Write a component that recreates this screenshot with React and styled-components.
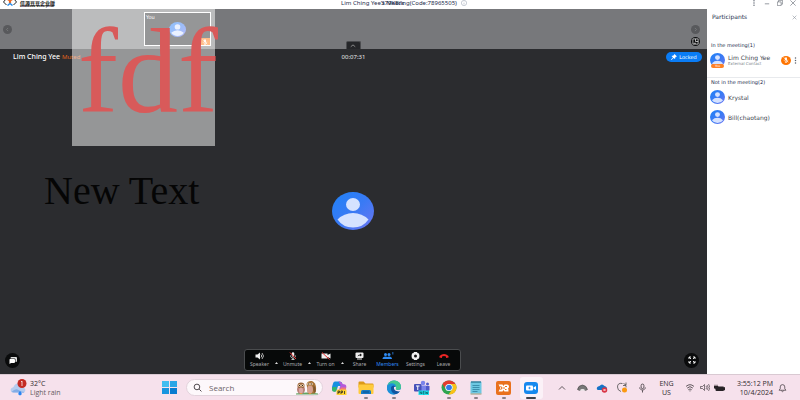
import React from "react";
import styled, { createGlobalStyle, css } from "styled-components";

const ui = '"DejaVu Sans", "Noto Sans", "Noto Sans CJK SC", sans-serif';
const narrow = '"Noto Sans", "Noto Sans CJK SC", sans-serif';
const system = '"Open Sans", "Noto Sans", sans-serif';

const Global = createGlobalStyle`
  *, *::before, *::after { box-sizing: border-box; }
  body { margin: 0; overflow: hidden; font-family: ${ui}; font-size: 6px; line-height: 8px; }
  button, input { font: inherit; color: inherit; border: 0; padding: 0; margin: 0; background: none; }
  h1, h2, h3, p, ul { margin: 0; padding: 0; font-size: inherit; font-weight: inherit; list-style: none; }
  svg { display: block; flex: none; }
`;

const Page = styled.div`
  min-height: 100vh;
  display: grid;
  grid-template-rows: 9px 1fr 26px;
`;
const TitleBar = styled.header`
  display: grid;
  grid-template-columns: 1fr auto 1fr;
  background: #fff;
  color: #1c2c4c;
`;
const Brand = styled.div`
  display: flex;
  gap: 3px;
  padding-left: 3px;
`;
const BrandText = styled.div`
  display: flex;
  flex-direction: column;
  color: #151515;
  white-space: nowrap;
`;
const BrandName = styled.span`
  font: 700 5px/5px "Noto Sans CJK SC", sans-serif;
`;
const BrandSub = styled.span`
  font: 700 3px/3px ${ui};
`;
const Title = styled.h1`
  position: relative;
  display: flex;
  gap: 4px;
  padding-left: 8px;
  font: 400 6px/7px ${narrow};
  white-space: nowrap;
`;
const Rate = styled.span`
  position: absolute;
  left: 48px;
  top: 0;
`;
const WindowButtons = styled.div`
  display: flex;
  justify-content: flex-end;
  gap: 3px;
  padding-right: 2px;
`;
const WindowButton = styled.button`
  width: 10px;
  height: 6px;
  display: grid;
  place-items: center;
  color: #555c68;
`;
const Meeting = styled.main`
  display: grid;
  grid-template-columns: 1fr 93px;
`;
const Call = styled.section`
  position: relative;
  display: grid;
  grid-template-rows: 40px 1fr;
  background: #2b2c2f;
  color: #fff;
`;
const Strip = styled.div`
  position: relative;
  display: flex;
  justify-content: space-between;
  align-items: center;
  background: #77787b;
  padding: 0 7px 0 3px;
`;
const Round = styled.button`
  width: ${(p) => p.$size}px;
  height: ${(p) => p.$size}px;
  border-radius: 50%;
  display: grid;
  place-items: center;
  background: ${(p) => (p.$muted ? "#58595c" : "#0a0b0c")};
  color: ${(p) => (p.$muted ? "#8d8e90" : "#fff")};
`;
const StripEnd = styled.div`
  display: flex;
  flex-direction: column;
  gap: 3px;
  padding-top: 12px;
`;
const Collapse = styled.button`
  position: absolute;
  left: 50%;
  bottom: 0;
  width: 15px;
  height: 8px;
  margin-left: -8px;
  border: 1px solid #4b4c4f;
  border-bottom: 0;
  border-radius: 2px 2px 0 0;
  background: #252629;
  color: #aaa;
  display: grid;
  place-items: center;
`;
const Tile = styled.div`
  position: absolute;
  left: 144px;
  top: 3px;
  width: 67px;
  height: 34px;
  border: 1px solid #fff;
  background: #2b2c2f;
  display: grid;
  place-items: center;
`;
const TileName = styled.span`
  position: absolute;
  left: 1px;
  top: 0;
  font-size: 5px;
`;
const TileMic = styled.span`
  position: absolute;
  right: 0;
  bottom: 0;
  width: 10px;
  height: 7px;
  background: #ff7a10;
  display: grid;
  place-items: center;
`;
const Stage = styled.div`
  display: grid;
  grid-template-rows: 24px 1fr auto;
  padding-bottom: 3px;
`;
const StageHead = styled.div`
  display: grid;
  grid-template-columns: 1fr auto 1fr;
  align-items: start;
  padding: 4px 5px 0;
`;
const Speaker = styled.p`
  padding-left: 8px;
  font: 500 7px/8px ${narrow};
`;
const Muted = styled.span`
  color: #e0631b;
  font-size: 6px;
  font-weight: 400;
`;
const Timer = styled.time`
  color: #e8e8e8;
  font-family: ${narrow};
`;
const Locked = styled.button`
  justify-self: end;
  width: 36px;
  height: 10px;
  margin-top: -1px;
  border-radius: 5px;
  background: #0a7cf5;
  display: flex;
  align-items: center;
  justify-content: center;
  gap: 2px;
  font-size: 5px;
`;
const Center = styled.div`
  display: grid;
  place-items: center;
  padding-right: 2px;
`;
const Controls = styled.div`
  display: flex;
  justify-content: space-between;
  align-items: center;
  padding: 0 8px 0 5px;
`;
const Toolbar = styled.div`
  display: flex;
  align-items: center;
  height: 22px;
  padding: 0 2px;
  border: 1px solid #4a4c4e;
  border-radius: 3px;
  background: #070909;
`;
const Tool = styled.button`
  width: ${(p) => (p.$split ? 26 : 28)}px;
  display: flex;
  flex-direction: column;
  align-items: center;
  gap: 1px;
`;
const ToolLabel = styled.span`
  font: 5px/7px ${narrow};
  color: ${(p) => (p.$active ? "#2f8cf5" : "#a9abad")};
`;
const Caret = styled.button`
  width: 7px;
  height: 8px;
  padding-top: 5px;
  display: grid;
  place-items: center;
  color: #ddd;
`;
const Note = styled.div`
  position: absolute;
  left: 72px;
  top: 0;
  width: 143px;
  height: 137px;
  background: rgba(255, 255, 255, 0.5);
  color: #d85a5a;
  font: 120px/126px "Liberation Serif", serif;
  padding-left: 6px;
  white-space: nowrap;
`;
const FreeText = styled.div`
  position: absolute;
  left: 44px;
  top: 158px;
  color: #050505;
  font: 40px/48px "Liberation Serif", serif;
  white-space: nowrap;
`;
const Side = styled.aside`
  background: #fff;
  color: #3c4450;
`;
const SideHead = styled.div`
  display: flex;
  justify-content: space-between;
  align-items: center;
  height: 16px;
  padding: 0 3px 0 5px;
  color: #1c2c4c;
  font: 6px/8px ${ui};
`;
const SideClose = styled.button`
  color: #888f99;
`;
const Group = styled.section`
  padding: ${(p) => (p.$first ? "16px 0 6px 3px" : "0 0 0 3px")};
  ${(p) => p.$first && css`border-bottom: 1px solid #e8eaed;`}
`;
const GroupTitle = styled.h3`
  font-size: 5px;
  line-height: 8px;
  padding: 0 1px;
  color: #1c2c4c;
`;
const Person = styled.li`
  display: flex;
  align-items: center;
  gap: 3px;
  height: ${(p) => (p.$tall ? 22 : 20)}px;
`;
const People = styled.ul`
  padding-top: ${(p) => (p.$gap ? 1 : 0)}px;
`;
const Face = styled.span`
  position: relative;
`;
const YouTag = styled.span`
  position: absolute;
  left: 1px;
  right: 1px;
  bottom: -1px;
  border-radius: 2px;
  background: #ff8126;
  color: #fff;
  font-size: 3px;
  line-height: 4px;
  text-align: center;
`;
const Names = styled.div`
  flex: 1;
  line-height: 7px;
  white-space: nowrap;
`;
const Role = styled.div`
  font-size: 4px;
  line-height: 6px;
  color: #777f8a;
`;
const Mic = styled.button`
  width: 10px;
  height: 9px;
  border-radius: 50%;
  background: #ff7400;
  color: #fff;
  display: grid;
  place-items: center;
`;
const More = styled.button`
  width: 6px;
  color: #59616d;
`;
const Taskbar = styled.footer`
  display: grid;
  grid-template-columns: auto 1fr auto;
  align-items: center;
  background: #f6e1ec;
  border-top: 1px solid #d9c9d2;
  color: #2f2a2e;
  font: 7px/9px ${system};
  padding: 0 9px 0 10px;
`;
const Weather = styled.button`
  display: flex;
  align-items: center;
  gap: 3px;
  text-align: left;
  line-height: 9px;
`;
const Condition = styled.div`
  color: #655c63;
`;
const Apps = styled.nav`
  display: flex;
  align-items: center;
  justify-content: flex-end;
  padding-right: 7px;
`;
const Start = styled.button`
  padding: 0 9px 0 0;
`;
const Search = styled.label`
  width: 137px;
  height: 17px;
  display: flex;
  align-items: center;
  gap: 7px;
  padding: 0 3px 0 6px;
  margin-right: 2px;
  border: 1px solid #e3d3dc;
  border-radius: 9px;
  background: #fdf8fb;
`;
const SearchInput = styled.input`
  flex: 1;
  min-width: 0;
  outline: 0;
  font-size: 8px;
  line-height: 12px;
  &::placeholder { color: #6b6368; opacity: 1; }
`;
const AppGrid = styled.div`
  display: grid;
  grid-template-columns: repeat(8, 1fr);
  width: 220px;
`;
const AppButton = styled.button`
  position: relative;
  height: 22px;
  margin: 0 2px;
  border-radius: 3px;
  display: grid;
  place-items: center;
  background: ${(p) => (p.$active ? "#fbf1f7" : "transparent")};
  &::after {
    content: "";
    display: ${(p) => (p.$open || p.$active ? "block" : "none")};
    position: absolute;
    bottom: 0;
    left: 50%;
    width: ${(p) => (p.$active ? 10 : 4)}px;
    height: 2px;
    border-radius: 1px;
    background: ${(p) => (p.$active ? "#3f444c" : "#8b8188")};
    transform: translateX(-50%);
  }
`;
const Tray = styled.div`
  display: flex;
  align-items: center;
`;
const TrayButton = styled.button`
  width: ${(p) => p.$w}px;
  height: 20px;
  display: grid;
  place-items: center;
  text-align: center;
`;
const Clock = styled.button`
  width: 46px;
  text-align: right;
  white-space: nowrap;
`;

function Avatar({ w, h, id }) {
  return (
    <svg width={w} height={h} viewBox="0 0 42 38" preserveAspectRatio="none" aria-hidden="true">
      <defs>
        <linearGradient id={id} x1="0" y1="0" x2="1" y2="1">
          <stop offset="0" stopColor="#1f82f7" />
          <stop offset="0.5" stopColor="#397af4" />
          <stop offset="1" stopColor="#6d76f2" />
        </linearGradient>
      </defs>
      <ellipse cx="21" cy="19" rx="21" ry="19" fill={`url(#${id})`} />
      <ellipse cx="21" cy="12.5" rx="7" ry="6.5" fill="#d5e2ff" />
      <path d="M5.500 27.500Q12 21 21 21T36.500 27.500Q31 35.500 21 35.500T5.500 27.500Z" fill="#d5e2ff" />
    </svg>
  );
}

function Line({ d, w = 8, h = 8, sw = 1, box = "0 0 16 16", color = "currentColor", children }) {
  return (
    <svg width={w} height={h} viewBox={box} fill="none" stroke={color} strokeWidth={sw * 1.5} aria-hidden="true">
      {d && <path d={d} />}
      {children}
    </svg>
  );
}

const MicOff = ({ w = 8, h = 8, slash = "#f03434", fill = "#eee" }) => (
  <svg width={w} height={h} viewBox="0 0 16 16" fill="none" aria-hidden="true">
    <rect x="5.500" y="0.500" width="5" height="9" rx="2.500" fill={fill} />
    <path d="M3 7c0 7 10 7 10 0M8 12v3M5 15h6" stroke={fill} strokeWidth="1.500" />
    <path d="M2 1l12 13" stroke={slash} strokeWidth="2" />
  </svg>
);

const SpeakerIcon = () => (
  <svg width="9" height="8" viewBox="0 0 18 16" fill="none" aria-hidden="true">
    <path d="M1 5h4l5-4v14l-5-4H1z" fill="#eee" />
    <path d="M12 5q3 3 0 6M14 2q6 6 0 12" stroke="#eee" strokeWidth="1.500" />
  </svg>
);
const CameraOff = () => (
  <svg width="10" height="8" viewBox="0 0 20 16" fill="none" aria-hidden="true">
    <path d="M1 3h12v3l6-3v10l-6-3v3H1z" fill="#eee" />
    <path d="M2 1l15 14" stroke="#e83232" strokeWidth="2" />
  </svg>
);
const ShareIcon = () => (
  <svg width="9" height="8" viewBox="0 0 18 16" aria-hidden="true">
    <rect x="1" y="1" width="16" height="11" rx="2" fill="#eee" />
    <path d="M4 13h10v2H4z" fill="#eee" />
    <path d="M5 9q1-4 5-4V3l4 3-4 3V7Q7 7 5 9z" fill="#111" />
  </svg>
);
const MembersIcon = () => (
  <svg width="12" height="8" viewBox="0 0 24 16" fill="#2f8cf5" aria-hidden="true">
    <circle cx="7" cy="5" r="3" /><circle cx="14" cy="5" r="3" />
    <path d="M1 14q0-5 6-5 3 0 4 1 1-1 3-1 6 0 6 5zM21 0h1.500v5H21z" />
  </svg>
);
const GearIcon = () => (
  <svg width="9" height="8" viewBox="0 0 18 16" aria-hidden="true">
    <path d="M6 0h6l1 2 3 1 1 5-1 5-3 1-1 2H6l-1-2-3-1-1-5 1-5 3-1z" fill="#eee" />
    <circle cx="9" cy="8" r="3" fill="#111" />
  </svg>
);
const LeaveIcon = () => (
  <svg width="10" height="8" viewBox="0 0 20 16" aria-hidden="true">
    <path d="M1 11V8q9-8 18 0v3l-5 1V9q-4-2-8 0v3z" fill="#ed2525" />
  </svg>
);
const CaretIcon = () => (
  <svg width="3" height="2" viewBox="0 0 6 4" aria-hidden="true"><path d="M0 4l3-4 3 4z" fill="currentColor" /></svg>
);

const BrandMark = () => (
  <svg width="14" height="6" viewBox="0 0 28 12" fill="none" aria-hidden="true">
    <path d="M6-2L1 4l6 6M22-2l5 6-6 6" stroke="#222" strokeWidth="2" />
    <path d="M9-1l5 3 5-3" stroke="#ef6b22" strokeWidth="2.500" />
    <circle cx="14" cy="4" r="2.500" fill="#ef6b22" />
    <path d="M9 11l5-4 5 4" stroke="#2b8de8" strokeWidth="3" />
  </svg>
);

const CopilotIcon = () => (
  <svg width="16" height="16" viewBox="0 0 32 32" aria-hidden="true">
    <path d="M8 3h10q4 0 5 5l1 4H14l-3 10H7q-6 0-5-8l2-7q1-4 4-4z" fill="#168fe0" />
    <path d="M3 14h9L9 24q-8 0-7-6z" fill="#35b56b" />
    <path d="M17 3q5 0 6 5l5 1q4 1 2 9l-2 5H15l4-13-4-7z" fill="#b558db" />
    <path d="M20 15h10q0 8-4 11H15z" fill="#f17a78" />
    <rect x="11" y="19" width="20" height="11" rx="1" fill="#ffd22e" />
    <path d="M14 28v-6h3v3h-3M20 28v-6h3v3h-3M27 22v6" stroke="#222" strokeWidth="1.500" fill="none" />
  </svg>
);
const FolderIcon = () => (
  <svg width="16" height="16" viewBox="0 0 32 32" aria-hidden="true">
    <path d="M1 5q0-2 2-2h8l4 4h14q2 0 2 2v6H1z" fill="#dc9a18" />
    <rect x="1" y="9" width="30" height="19" rx="2" fill="#ffcb3d" />
    <path d="M6 28v-5q0-3 3-3h14q3 0 3 3v5z" fill="#1779c5" />
    <path d="M10 24h12" stroke="#0d518d" strokeWidth="2" />
  </svg>
);
const EdgeIcon = () => (
  <svg width="16" height="15" viewBox="0 0 32 30" aria-hidden="true">
    <circle cx="16" cy="15" r="14" fill="#1685cf" />
    <path d="M3 11Q7 0 18 1q12 2 12 13 0 6-8 6-5 0-3-4 1-7-7-7-5 0-9 2z" fill="#43c991" />
    <path d="M3 11Q8 5 15 7q6 2 5 8-2-4-6-3-5 2-4 8 2 7 8 9Q5 30 2 19z" fill="#1c91da" />
    <path d="M10 18q-1-6 5-7 4 0 4 5-2 4 3 5 4 0 7-1-4 8-11 8-7-2-8-10z" fill="#11549f" />
    <path d="M16 14q5-2 4 2-2 4 4 4 4 0 8-2v3q-5 3-11 1-6-2-5-8z" fill="#f6e1ec" />
  </svg>
);
const TeamsIcon = () => (
  <svg width="17" height="16" viewBox="0 0 34 32" aria-hidden="true">
    <circle cx="20" cy="6" r="4.500" fill="#7b83eb" /><circle cx="29" cy="8" r="3" fill="#5059c9" />
    <path d="M12 11h14v12q-2 5-8 5-6-1-6-6z" fill="#7b83eb" />
    <path d="M26 12h7v8q-1 4-5 4h-2z" fill="#5059c9" />
    <rect x="2" y="8" width="15" height="15" rx="2" fill="#4650b8" />
    <path d="M6 12h7M9.500 12v8" stroke="#fff" strokeWidth="2" />
    <rect x="11" y="21" width="21" height="9" fill="#1fe4ed" />
    <path d="M14 28v-5l3 5v-5M23 23h-3v5h3M20 25.500h3M25 23l1 5 1.500-4 1.500 4 1-5" stroke="#093b44" fill="none" />
  </svg>
);
const ChromeIcon = () => (
  <svg width="16" height="15" viewBox="0 0 32 32" preserveAspectRatio="none" aria-hidden="true">
    <circle cx="16" cy="16" r="15" fill="#2fa44f" />
    <path d="M3 8.500A15 15 0 0 1 29 8.500H16a7.500 7.500 0 0 0-6.500 11.200z" fill="#e33b2e" />
    <path d="M29 8.500A15 15 0 0 1 15 31l7.500-11.200A7.500 7.500 0 0 0 16 8.500z" fill="#fbc116" />
    <circle cx="16" cy="16" r="7.500" fill="#fff" /><circle cx="16" cy="16" r="5.800" fill="#317be8" />
  </svg>
);
const NotepadIcon = () => (
  <svg width="12" height="15" viewBox="0 0 24 30" aria-hidden="true">
    <rect x="1" y="3" width="22" height="26" rx="2" fill="#6dc8e2" />
    <path d="M3 4h18" stroke="#17607c" strokeWidth="4" strokeDasharray="2 2" />
    <path d="M5 11h14M5 15h14M5 19h14M5 23h10" stroke="#2c7d9c" strokeWidth="1.500" />
    <path d="M1 27h22v2H1z" fill="#d5a67a" />
  </svg>
);
const XamppIcon = () => (
  <svg width="15" height="14" viewBox="0 0 30 28" fill="none" aria-hidden="true">
    <rect width="30" height="28" rx="4" fill="#e9711d" />
    <path d="M5 7h8l2 3 2-3h5q4 0 4 4 0 3-2 4 1 1 1 6h-8l-2-3-2 3H5l4-7z" fill="#fff" />
    <path d="M9 10l3 4-3 4M18 11h4M18 17h3M13 14h5" stroke="#e9711d" strokeWidth="2" />
  </svg>
);
const MeetIcon = () => (
  <svg width="14" height="12" viewBox="0 0 28 24" aria-hidden="true">
    <rect width="28" height="24" rx="6" fill="#1689ee" />
    <rect x="4" y="7" width="14" height="10" rx="2" fill="#fff" />
    <path d="M19 11l5-3v8l-5-3z" fill="#fff" />
    <path d="M11 9.500v5M8.500 12h5" stroke="#1689ee" strokeWidth="1.500" />
  </svg>
);
const StartIcon = () => (
  <svg width="15" height="13" viewBox="0 0 30 26" aria-hidden="true">
    <path d="M0 0h14v12H0z" fill="#42bdf0" /><path d="M16 0h14v12H16z" fill="#2ba5e6" />
    <path d="M0 14h14v12H0z" fill="#1995df" /><path d="M16 14h14v12H16z" fill="#087cd0" />
  </svg>
);
const OwlsIcon = () => (
  <svg width="24" height="15" viewBox="0 0 48 30" aria-hidden="true">
    <path d="M2 27q22-4 44 0v2H2z" fill="#66a365" />
    <ellipse cx="12" cy="19" rx="8" ry="9" fill="#b98279" /><ellipse cx="12" cy="11" rx="7" ry="6" fill="#9a673b" />
    <ellipse cx="12" cy="21" rx="4" ry="6" fill="#dba8a5" />
    <path d="M23 8q2-7 11-6 7 3 8 12 1 10-3 13H26z" fill="#a87335" />
    <ellipse cx="30" cy="19" rx="6" ry="8" fill="#d6a292" />
    <path d="M37 10q7 8 3 16-5-4-3-16z" fill="#80572e" />
    <circle cx="9" cy="11" r="2.500" fill="#f2dcc2" /><circle cx="15" cy="11" r="2.500" fill="#f2dcc2" />
    <circle cx="27" cy="8" r="2.500" fill="#f2dcc2" /><circle cx="33" cy="8" r="2.500" fill="#f2dcc2" />
    <path d="M9 10v2M15 10v2M27 7v2M33 7v2" stroke="#332515" strokeWidth="2" />
    <path d="M10 27h4M28 27h4" stroke="#e49739" strokeWidth="2" />
  </svg>
);
const WeatherIcon = () => (
  <svg width="17" height="17" viewBox="0 0 34 34" aria-hidden="true">
    <path d="M3 26q-5-7 4-10Q11 6 20 10q4 2 5 7 8 1 5 8-2 3-5 2H7z" fill="#b5ccef" />
    <path d="M3 26q8-8 14-4t12 4q-2 2-5 1H7z" fill="#83ace6" />
    <path d="M20 24q7 7 0 9-7-2 0-9z" fill="#2684f4" />
    <circle cx="24" cy="9" r="9" fill="#c42b24" />
    <path d="M22 6l2-2v10" fill="none" stroke="#fff" strokeWidth="1.500" />
  </svg>
);

const apps = [
  ["Copilot", CopilotIcon, false],
  ["File Explorer", FolderIcon, true],
  ["Edge", EdgeIcon, true],
  ["Teams", TeamsIcon, false],
  ["Chrome", ChromeIcon, true],
  ["Notepad", NotepadIcon, true],
  ["XAMPP", XamppIcon, true],
];

const tools = [
  ["Speaker", SpeakerIcon, true],
  ["Unmute", MicOff, true],
  ["Turn on", CameraOff, true],
  ["Share", ShareIcon],
  ["Members", MembersIcon, false, true],
  ["Settings", GearIcon],
  ["Leave", LeaveIcon],
];

function CallView() {
  return (
    <Call>
      <Strip>
        <Round $size={9} $muted aria-label="Previous"><Line w={5} h={5} sw={1.2} d="M10 3L5 8l5 5" /></Round>
        <Tile>
          <TileName>You</TileName>
          <Avatar w={17} h={15} id="tileFace" />
          <TileMic><MicOff w={6} h={6} fill="#fff" slash="#fff" /></TileMic>
        </Tile>
        <Collapse aria-label="Collapse strip"><Line w={6} h={6} sw={1.3} d="M2 10l6-5 6 5" /></Collapse>
        <StripEnd>
          <Round $size={9} $muted aria-label="Next"><Line w={5} h={5} sw={1.2} d="M6 3l5 5-5 5" /></Round>
          <Round $size={9} aria-label="Layout">
            <Line w={7} h={7} d="M2 2h12v12H2zM8 2v6h6M4 12h5" />
          </Round>
        </StripEnd>
      </Strip>
      <Stage>
        <StageHead>
          <Speaker>Lim Ching Yee <Muted>Muted</Muted></Speaker>
          <Timer>00:07:31</Timer>
          <Locked>
            <svg width="6" height="6" viewBox="0 0 12 12" fill="#fff" aria-hidden="true"><path d="M7 0l5 5-3 1-1 4-3-2-4 4-1-1 4-4-3-3 4-1z" /></svg>
            Locked
          </Locked>
        </StageHead>
        <Center><Avatar w={42} h={38} id="mainFace" /></Center>
        <Controls>
          <Round $size={15} aria-label="Chat">
            <svg width="8" height="7" viewBox="0 0 16 14" fill="#fff" aria-hidden="true">
              <path d="M5 0h9q2 0 2 2v6q0 2-2 2h-1V5q0-2-2-2H3V2q0-2 2-2z" fill="#ddd" /><path d="M2 4h8q2 0 2 2v4q0 2-2 2H4l-3 2V5z" />
            </svg>
          </Round>
          <Toolbar>
            {tools.map(([label, Icon, split, active]) => (
              <React.Fragment key={label}>
                <Tool $split={split}>
                  <Icon />
                  <ToolLabel $active={active}>{label}</ToolLabel>
                </Tool>
                {split && <Caret aria-label={`${label} options`}><CaretIcon /></Caret>}
              </React.Fragment>
            ))}
          </Toolbar>
          <Round $size={15} aria-label="Full screen">
            <Line w={8} h={8} sw={1.2} d="M2 6V2h4M2 2l4 4M10 2h4v4M14 2l-4 4M2 10v4h4M2 14l4-4M10 14h4v-4M14 14l-4-4" />
          </Round>
        </Controls>
      </Stage>
      <Note>fdf</Note>
      <FreeText>New Text</FreeText>
    </Call>
  );
}

function Participants() {
  return (
    <Side>
      <SideHead>
        <h2>Participants</h2>
        <SideClose aria-label="Close"><Line w={5} h={5} sw={1.2} d="M2 2l12 12M14 2L2 14" /></SideClose>
      </SideHead>
      <Group $first>
        <GroupTitle>In the meeting(1)</GroupTitle>
        <People>
          <Person $tall>
            <Face><Avatar w={15} h={14} id="face1" /><YouTag>You</YouTag></Face>
            <Names>Lim Ching Yee<Role>External Contact</Role></Names>
            <Mic aria-label="Muted"><MicOff w={6} h={6} fill="#fff" slash="#fff" /></Mic>
            <More aria-label="More">
              <svg width="3" height="7" viewBox="0 0 6 14" fill="currentColor" aria-hidden="true"><circle cx="3" cy="2" r="1.500" /><circle cx="3" cy="7" r="1.500" /><circle cx="3" cy="12" r="1.500" /></svg>
            </More>
          </Person>
        </People>
      </Group>
      <Group>
        <GroupTitle>Not in the meeting(2)</GroupTitle>
        <People $gap>
          <Person><Avatar w={15} h={14} id="face2" /><Names>Krystal</Names></Person>
          <Person><Avatar w={15} h={14} id="face3" /><Names>Bill(chaotang)</Names></Person>
        </People>
      </Group>
    </Side>
  );
}

function SystemBar() {
  return (
    <Taskbar>
      <Weather>
        <WeatherIcon />
        <div>32°C<Condition>Light rain</Condition></div>
      </Weather>
      <Apps>
        <Start aria-label="Start"><StartIcon /></Start>
        <Search>
          <Line w={9} h={9}><circle cx="7" cy="7" r="5" /><path d="M11 11l4 4" /></Line>
          <SearchInput type="text" placeholder="Search" aria-label="Search" />
          <OwlsIcon />
        </Search>
        <AppGrid>
          {apps.map(([label, Icon, open]) => (
            <AppButton key={label} aria-label={label} $open={open}><Icon /></AppButton>
          ))}
          <AppButton aria-label="Meeting" $active><MeetIcon /></AppButton>
        </AppGrid>
      </Apps>
      <Tray>
        <TrayButton $w={20} aria-label="Hidden icons"><Line d="M2 11l6-6 6 6" /></TrayButton>
        <TrayButton $w={20} aria-label="Network drive">
          <svg width="11" height="8" viewBox="0 0 22 16" fill="none" aria-hidden="true"><path d="M1 11Q2 3 11 2q8 1 10 9l-4 2q-6-6-12 0z" fill="#777" stroke="#333" /><path d="M5 13q6-7 12 0" fill="#e5e5e5" /></svg>
        </TrayButton>
        <TrayButton $w={20} aria-label="OneDrive">
          <svg width="12" height="10" viewBox="0 0 24 20" aria-hidden="true"><path d="M2 13q-2-6 5-7Q12 0 17 6q6 1 5 8H4z" fill="#1572c7" /><circle cx="17" cy="14" r="5.500" fill="#d93445" /><path d="M15 12l4 4M19 12l-4 4" stroke="#fff" strokeWidth="1.500" /></svg>
        </TrayButton>
        <TrayButton $w={20} aria-label="Update">
          <svg width="12" height="11" viewBox="0 0 24 22" fill="none" aria-hidden="true"><path d="M13 3Q3 1 3 10q0 7 7 9M15 3l5 3M20 1v6h-6M20 8v3" stroke="#444" strokeWidth="1.500" /><circle cx="17" cy="16" r="5" fill="#fb9911" /></svg>
        </TrayButton>
        <TrayButton $w={20} aria-label="Microphone">
          <Line w={9} h={10} sw={0.9}><rect x="5.500" y="1" width="5" height="8" rx="2.500" /><path d="M3 7c0 6 10 6 10 0M8 12v4" /></Line>
        </TrayButton>
        <TrayButton $w={29}>ENG<br />US</TrayButton>
        <TrayButton $w={17} aria-label="Wi-Fi">
          <Line w={10} h={9} sw={0.9} d="M1 6q7-6 14 0M3 9q5-5 10 0M5 12q3-3 6 0M8 13v2" />
        </TrayButton>
        <TrayButton $w={14} aria-label="Volume">
          <Line w={10} h={9} sw={0.8} box="0 0 20 16" d="M1 6h4l4-4v12l-4-4H1zM12 5q3 3 0 6M14 3q5 5 0 10M17 1q6 7 0 14" />
        </TrayButton>
        <TrayButton $w={15} aria-label="Battery">
          <svg width="11" height="8" viewBox="0 0 22 16" aria-hidden="true"><rect x="3" y="5" width="17" height="9" rx="2" fill="#282327" /><path d="M20 7h2v5h-2zM2 1v4M6 1v4M0 4h8v4q-4 3-8 0z" fill="#282327" stroke="#282327" /></svg>
        </TrayButton>
        <Clock>3:55:12 PM<br />10/4/2024</Clock>
        <TrayButton $w={18} aria-label="Notifications">
          <Line w={9} h={10} sw={0.8} d="M2 12l2-3V6q0-4 4-4t4 4v3l2 3zM6 13q2 3 4 0" />
        </TrayButton>
      </Tray>
    </Taskbar>
  );
}

export default function App() {
  return (
    <Page>
      <Global />
      <TitleBar>
        <Brand>
          <BrandMark />
          <BrandText>
            <BrandName>信源豆豆企业版</BrandName>
            <BrandSub>Linkdood Enterprise</BrandSub>
          </BrandText>
        </Brand>
        <Title>
          Lim Ching Yee's Meeting(Code:78965505)
          <Rate>379KB/s</Rate>
          <Line w={6} h={6} sw={0.8} color="#8792a3"><circle cx="8" cy="8" r="7" /><path d="M8 4v1M8 7v5" /></Line>
        </Title>
        <WindowButtons>
          <WindowButton aria-label="Menu"><svg width="2" height="6" viewBox="0 0 4 12" fill="currentColor" aria-hidden="true"><circle cx="2" cy="1.500" r="1.300" /><circle cx="2" cy="6" r="1.300" /><circle cx="2" cy="10.500" r="1.300" /></svg></WindowButton>
          <WindowButton aria-label="Minimize"><Line w={6} h={5} d="M1 9h14" sw={1.3} /></WindowButton>
          <WindowButton aria-label="Restore"><Line w={6} h={6} d="M1 5h10v10H1zM4 5V1h11v10h-4" /></WindowButton>
          <WindowButton aria-label="Close window"><Line w={6} h={6} d="M1 1l14 14M15 1L1 15" /></WindowButton>
        </WindowButtons>
      </TitleBar>
      <Meeting>
        <CallView />
        <Participants />
      </Meeting>
      <SystemBar />
    </Page>
  );
}
